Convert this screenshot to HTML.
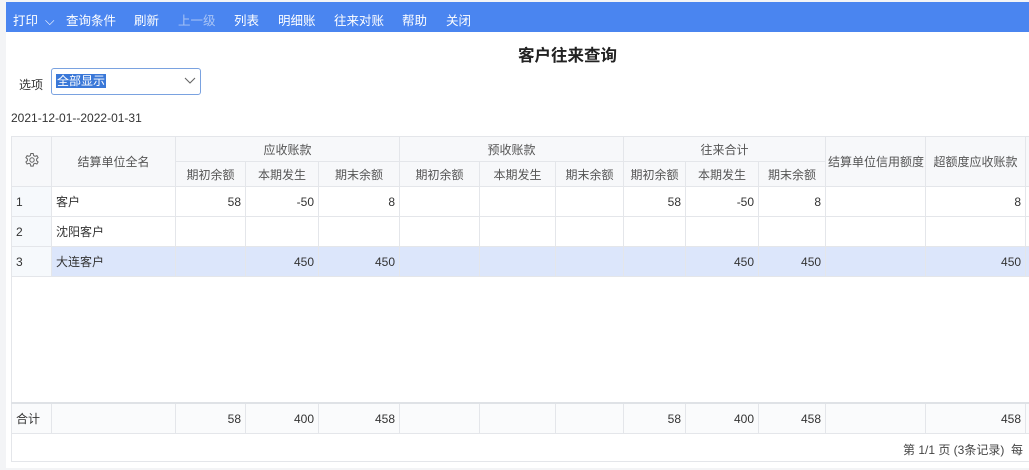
<!DOCTYPE html>
<html><head><meta charset="utf-8"><style>
*{box-sizing:border-box;margin:0;padding:0}
body{width:1029px;height:470px;background:#f3f4f6;font-family:"Liberation Sans","Noto Sans CJK SC",sans-serif;font-size:12px;color:#333;position:relative;overflow:hidden}
.panel{position:absolute;left:6px;top:2px;width:1023px;height:466px;background:#fff}
.bar{position:absolute;left:6px;top:2px;width:1023px;height:30px;background:#4a85f0;color:#fff;font-size:12.5px}
.bar span{position:absolute;top:8px}
.title{position:absolute;left:518px;top:42px;font-size:16.5px;font-weight:bold;color:#222}
.lbl{position:absolute;left:19px;top:76px}
.sel{position:absolute;left:51px;top:68px;width:150px;height:27px;border:1px solid #7aa2e0;border-radius:3px}
.sel .t{position:absolute;left:4px;top:5px;background:#3a78d8;color:#fff;line-height:14px;padding:0 1px}
.date{position:absolute;left:11px;top:111px}
table{position:absolute;left:11px;top:136px;border-collapse:collapse;table-layout:fixed;width:1018px}
td{border:1px solid #e4e6ea;height:30px;padding:0 4px;white-space:nowrap;overflow:hidden}
.h td{background:#f7f8fa;text-align:center;color:#555;height:25px}
.n{text-align:right}
.rn{background:#f6f9fc}
.hl td{background:#dce6fb}
.hl td.rn{background:#f6f9fc}
.empty{position:absolute;left:11px;top:276px;width:1018px;height:126px;border-left:1px solid #e4e6ea}
.tot{position:absolute;left:11px;top:402px;width:1018px;border-top:2px solid #dfe2e6}
.pager{position:absolute;left:11px;top:432px;width:1018px;height:30px;border-bottom:1px solid #e4e6ea;border-left:1px solid #e4e6ea}
.pager span{position:absolute;left:891px;top:9px;color:#444}
</style></head><body>
<div class="panel"></div>
<div class="bar">
<span style="left:7px">打印&nbsp;&nbsp;⌵</span><span style="left:60px">查询条件</span><span style="left:128px">刷新</span><span style="left:172px;color:#a9c4f5">上一级</span><span style="left:228px">列表</span><span style="left:272px">明细账</span><span style="left:328px">往来对账</span><span style="left:396px">帮助</span><span style="left:440px">关闭</span>
</div>
<div class="title">客户往来查询</div>
<div class="lbl">选项</div>
<div class="sel"><span class="t">全部显示</span><svg style="position:absolute;right:4px;top:8px" width="12" height="8"><path d="M1 1L6 6L11 1" fill="none" stroke="#666" stroke-width="1.1"/></svg></div>
<div class="date">2021-12-01--2022-01-31</div>
<table>
<colgroup><col style="width:40px"><col style="width:124px"><col style="width:70px"><col style="width:73px"><col style="width:81px"><col style="width:80px"><col style="width:76px"><col style="width:68px"><col style="width:62px"><col style="width:73px"><col style="width:67px"><col style="width:100px"><col style="width:100px"><col style="width:4px"></colgroup>
<tr class="h"><td rowspan="2" style="height:50px"><svg width="16" height="16" viewBox="0 0 16 16"><path d="M6.8 1.5h2.4l.4 2 1.4.8 1.9-.7 1.2 2-1.5 1.4v1.6l1.5 1.4-1.2 2-1.9-.7-1.4.8-.4 2H6.8l-.4-2-1.4-.8-1.9.7-1.2-2 1.5-1.4V7L1.9 5.6l1.2-2 1.9.7 1.4-.8z" fill="none" stroke="#666" stroke-width="1"/><circle cx="8" cy="8" r="2.2" fill="none" stroke="#666"/></svg></td><td rowspan="2">结算单位全名</td><td colspan="3">应收账款</td><td colspan="3">预收账款</td><td colspan="3">往来合计</td><td rowspan="2" style="padding:0 2px">结算单位信用额度</td><td rowspan="2">超额度应收账款</td><td rowspan="2" style="padding:0"></td></tr>
<tr class="h"><td>期初余额</td><td>本期发生</td><td>期末余额</td><td>期初余额</td><td>本期发生</td><td>期末余额</td><td>期初余额</td><td>本期发生</td><td>期末余额</td></tr>
<tr><td class="rn">1</td><td>客户</td><td class="n">58</td><td class="n">-50</td><td class="n">8</td><td></td><td></td><td></td><td class="n">58</td><td class="n">-50</td><td class="n">8</td><td></td><td class="n">8</td><td style="padding:0"></td></tr>
<tr><td class="rn">2</td><td>沈阳客户</td><td></td><td></td><td></td><td></td><td></td><td></td><td></td><td></td><td></td><td></td><td></td><td style="padding:0"></td></tr>
<tr class="hl"><td class="rn">3</td><td>大连客户</td><td></td><td class="n">450</td><td class="n">450</td><td></td><td></td><td></td><td></td><td class="n">450</td><td class="n">450</td><td></td><td class="n">450</td><td style="padding:0"></td></tr>
</table>
<div class="empty"></div>
<table style="top:403px">
<colgroup><col style="width:40px"><col style="width:124px"><col style="width:70px"><col style="width:73px"><col style="width:81px"><col style="width:80px"><col style="width:76px"><col style="width:68px"><col style="width:62px"><col style="width:73px"><col style="width:67px"><col style="width:100px"><col style="width:100px"><col style="width:4px"></colgroup>
<tr style="background:#fafbfc"><td>合计</td><td></td><td class="n">58</td><td class="n">400</td><td class="n">458</td><td></td><td></td><td></td><td class="n">58</td><td class="n">400</td><td class="n">458</td><td></td><td class="n">458</td><td style="padding:0"></td></tr>
</table>
<div class="tot"></div>
<div class="pager"><span>第 1/1 页 (3条记录)&nbsp;&nbsp;每</span></div>
</body></html>
